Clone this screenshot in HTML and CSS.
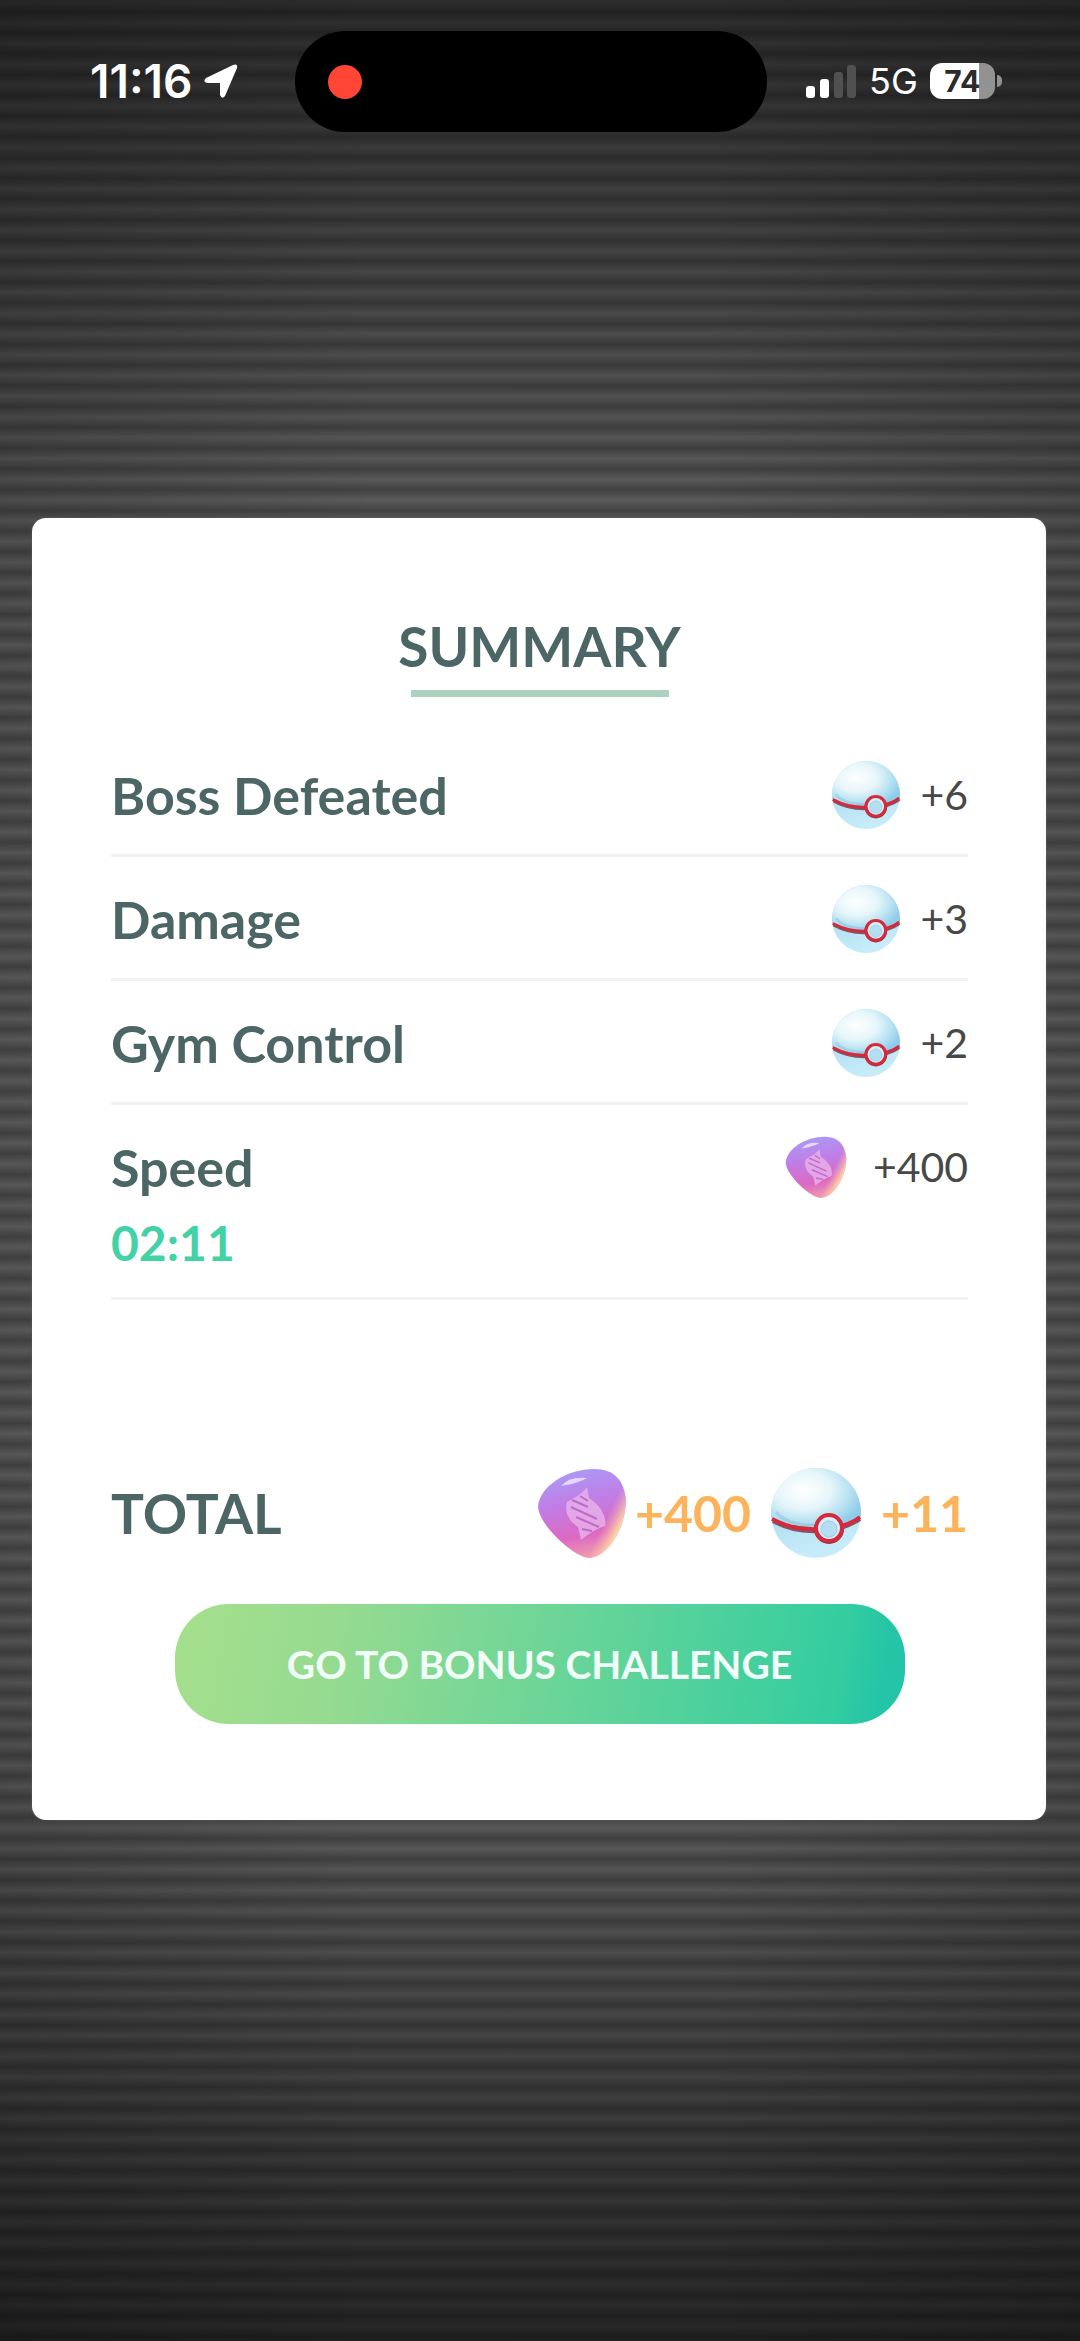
FILE: index.html
```html
<!DOCTYPE html>
<html lang="en">
<head>
<meta charset="utf-8">
<meta name="viewport" content="width=device-width, initial-scale=1">
<title>Raid summary</title>
<link rel="stylesheet" href="styles.css">
</head>
<body>
<svg class="defs" aria-hidden="true">
  <defs>
    <radialGradient id="ball-shell" cx="0.36" cy="0.36" r="0.68">
      <stop offset="0" stop-color="#ffffff"/>
      <stop offset="0.45" stop-color="#e6f6fa"/>
      <stop offset="0.75" stop-color="#b9e2f2"/>
      <stop offset="1" stop-color="#8fcdea"/>
    </radialGradient>
    <linearGradient id="ball-base" x1="0" y1="0" x2="0.3" y2="1">
      <stop offset="0" stop-color="#9dd2ea"/>
      <stop offset="1" stop-color="#c6ecf9"/>
    </linearGradient>
    <linearGradient id="candy-body" x1="0.35" y1="0" x2="0.55" y2="1">
      <stop offset="0" stop-color="#a99bf6"/>
      <stop offset="0.4" stop-color="#c27ce4"/>
      <stop offset="0.75" stop-color="#dc69c2"/>
      <stop offset="1" stop-color="#f09bb0"/>
    </linearGradient>
    <linearGradient id="candy-edge" x1="0.55" y1="0.45" x2="0.95" y2="0.65">
      <stop offset="0.55" stop-color="#ffb9a8" stop-opacity="0"/>
      <stop offset="1" stop-color="#ffe3a0"/>
    </linearGradient>
    <symbol id="ball" viewBox="0 0 90 90">
      <circle cx="45" cy="45" r="45" fill="url(#ball-base)"/>
      <path d="M0.3 50A45 45 0 1 1 89.8 49C70 64 25 66 0.3 50Z" fill="url(#ball-shell)"/>
      <path d="M5 44C16 58 45 60 58 54" fill="none" stroke="#8cc3dc" stroke-width="3" opacity="0.55"/>
      <path d="M2 53C18 62 32 64 48 63M70 60Q82 56 89 51" fill="none" stroke="#7f5668" stroke-width="4"/>
      <path d="M1 51C18 60 32 62 48 61M70 58Q82 55 89 49" fill="none" stroke="#d62a3c" stroke-width="4"/>
      <circle cx="58" cy="61" r="13" fill="#d5eef8" stroke="#9c2c3e" stroke-width="4"/>
      <circle cx="58" cy="60" r="13" fill="#d5eef8" stroke="#d62a3c" stroke-width="4"/>
      <circle cx="58" cy="61" r="8" fill="#b4dff1" stroke="#9acce4"/>
    </symbol>
    <symbol id="candy" viewBox="0 0 90 90">
      <path d="M1 38C3 18 30 1 57 1C78 1 87 13 89 32C89 58 72 89 52 90C38 90 1 57 1 38Z" fill="url(#candy-body)"/>
      <path d="M1 38C3 18 30 1 57 1C78 1 87 13 89 32C89 58 72 89 52 90C38 90 1 57 1 38Z" fill="url(#candy-edge)"/>
      <path d="M24 18Q32 8 50 10Q42 15 24 18Z" fill="#eee4ff" opacity="0.85"/>
      <path d="M50 19L52 30C63 37 70 48 68 58C61 60 54 64 44 72L41 59C32 53 27 44 30 34C38 29 44 27 50 19Z" fill="#e9b3e8" opacity="0.8"/>
      <path d="M35 32L51 39M34 39L60 51M39 49L62 59M45 61L55 63M43 28L51 33" stroke="#bd6ccb" stroke-width="2"/>
    </symbol>
  </defs>
</svg>

<header class="status">
  <div class="status-left">
    <time class="clock">11:16</time>
    <svg class="location" viewBox="0 0 34 34" aria-hidden="true"><path d="M2 14L29 1Q34 -1 33 4L21 32Q18 36 16 31V19H4Q-2 18 2 14Z" fill="#fff"/></svg>
  </div>
  <div class="island"><span class="record"></span></div>
  <div class="status-right">
    <svg class="signal" viewBox="0 0 50 33" aria-hidden="true">
      <rect x="0" y="21" width="9" height="12" rx="3" fill="#fff"/>
      <rect x="14" y="14" width="9" height="19" rx="3" fill="#fff"/>
      <rect x="28" y="7" width="9" height="26" rx="3" fill="#505050"/>
      <rect x="41" y="0" width="9" height="33" rx="3" fill="#505050"/>
    </svg>
    <span class="network">5G</span>
    <span class="battery">74</span>
    <span class="battery-tip"></span>
  </div>
</header>

<main class="stage">
  <section class="card">
    <h1 class="title">SUMMARY</h1>
    <ul class="rewards">
      <li class="row"><span class="label">Boss Defeated</span><span class="reward"><svg class="icon" aria-hidden="true"><use href="#ball"/></svg>+6</span></li>
      <li class="row"><span class="label">Damage</span><span class="reward"><svg class="icon" aria-hidden="true"><use href="#ball"/></svg>+3</span></li>
      <li class="row"><span class="label">Gym Control</span><span class="reward"><svg class="icon" aria-hidden="true"><use href="#ball"/></svg>+2</span></li>
      <li class="row row-speed"><span class="label">Speed</span><span class="reward"><svg class="icon icon-candy" aria-hidden="true"><use href="#candy"/></svg>+400</span><time class="elapsed">02:11</time></li>
    </ul>
    <div class="total">
      <span class="total-label">TOTAL</span>
      <svg class="icon-large" aria-hidden="true"><use href="#candy"/></svg>
      <span class="amount amount-candy">+400</span>
      <svg class="icon-large" aria-hidden="true"><use href="#ball"/></svg>
      <span class="amount amount-ball">+11</span>
    </div>
    <button class="bonus" type="button">GO TO BONUS CHALLENGE</button>
  </section>
</main>
</body>
</html>
```
FILE: styles.css
```css
* {
  box-sizing: border-box;
}

body {
  margin: 0;
  min-height: 100vh;
  display: flex;
  flex-direction: column;
  font-family: Lato, sans-serif;
  color: #4b6665;
  background:
    linear-gradient(to right, rgba(0, 0, 0, 0.16), transparent 35%, transparent 65%, rgba(0, 0, 0, 0.16)),
    linear-gradient(rgba(0, 0, 0, 0.56), rgba(0, 0, 0, 0.08) 23%, transparent 45%, transparent 62%, rgba(0, 0, 0, 0.1) 77%, rgba(0, 0, 0, 0.62)),
    repeating-linear-gradient(#666 0, #4a4a4a 12.5%, #666 25%) 0 2px / 100% 83px;
}

.defs {
  position: absolute;
  width: 0;
  height: 0;
}

.status {
  display: grid;
  grid-template-columns: 1fr 472px 1fr;
  padding: 31px 18px 0 0;
  color: #fff;
  font-family: Inter, sans-serif;
}

.status-left,
.status-right {
  display: flex;
  align-items: center;
  height: 100px;
}

.status-left {
  padding-left: 90px;
  gap: 12px;
}

.clock {
  font-size: 46px;
  font-weight: 600;
  line-height: 48px;
}

.location {
  width: 34px;
  height: 34px;
}

.island {
  display: flex;
  align-items: center;
  height: 101px;
  padding-left: 33px;
  border-radius: 51px;
  background: #000;
}

.record {
  width: 34px;
  height: 34px;
  border-radius: 50%;
  background: #ff4536;
}

.status-right {
  padding-left: 39px;
}

.signal {
  width: 50px;
  height: 33px;
}

.network {
  margin-left: 13px;
  font-size: 36px;
}

.battery {
  width: 65px;
  height: 36px;
  margin-left: 12px;
  border-radius: 12px;
  background: linear-gradient(to right, #fff 49px, #929292 49px);
  color: #2b2b2b;
  font-size: 30px;
  font-weight: 700;
  line-height: 36px;
  text-align: center;
}

.battery-tip {
  width: 5px;
  height: 12px;
  margin-left: 2px;
  border-radius: 0 6px 6px 0;
  background: #929292;
}

.stage {
  flex: 1;
  padding: 386px 34px 520px 32px;
}

.card {
  padding: 94px 78px 96px 79px;
  border-radius: 14px;
  background: #fff;
  box-shadow: 0 0 3px #52615c;
}

.title {
  width: 258px;
  margin: 0 auto;
  padding-bottom: 10px;
  border-bottom: 7px solid #acd2bf;
  display: flex;
  justify-content: center;
  font-size: 55px;
  font-weight: 700;
  line-height: 68px;
}

.rewards {
  margin: 0;
  padding: 36px 0 0;
  list-style: none;
}

.row {
  display: grid;
  grid-template-columns: 1fr auto;
  align-content: start;
  row-gap: 8px;
  height: 124px;
  padding-top: 28px;
  border-bottom: 3px solid #f2f2f2;
  line-height: 68px;
}

.row-speed {
  height: 195px;
}

.label {
  font-size: 52px;
  font-weight: 700;
}

.reward {
  display: flex;
  align-items: center;
  color: #484848;
  font-size: 41px;
}

.icon {
  width: 68px;
  height: 68px;
  margin-right: 20px;
}

.icon-candy {
  width: 62px;
  height: 62px;
  margin-right: 26px;
}

.elapsed {
  color: #43d2a5;
  font-size: 48px;
  font-weight: 700;
}

.total {
  display: flex;
  align-items: center;
  height: 90px;
  margin-top: 168px;
  font-weight: 700;
}

.total-label {
  margin-right: auto;
  font-size: 55px;
}

.icon-large {
  width: 90px;
  height: 90px;
}

.amount {
  color: #fbb45c;
  font-size: 50px;
}

.amount-candy {
  padding: 0 20px 0 8px;
}

.amount-ball {
  padding-left: 20px;
}

.bonus {
  display: block;
  width: 730px;
  max-width: 100%;
  height: 120px;
  margin: 46px auto 0;
  border: 0;
  border-radius: 54px;
  background: linear-gradient(100deg, #a5df8c, #96db90 22%, #5dd39a 62%, #33cda0 90%, #24c4a6 96%);
  color: #f2fff8;
  font-family: inherit;
  font-size: 39px;
  font-weight: 700;
}
```
